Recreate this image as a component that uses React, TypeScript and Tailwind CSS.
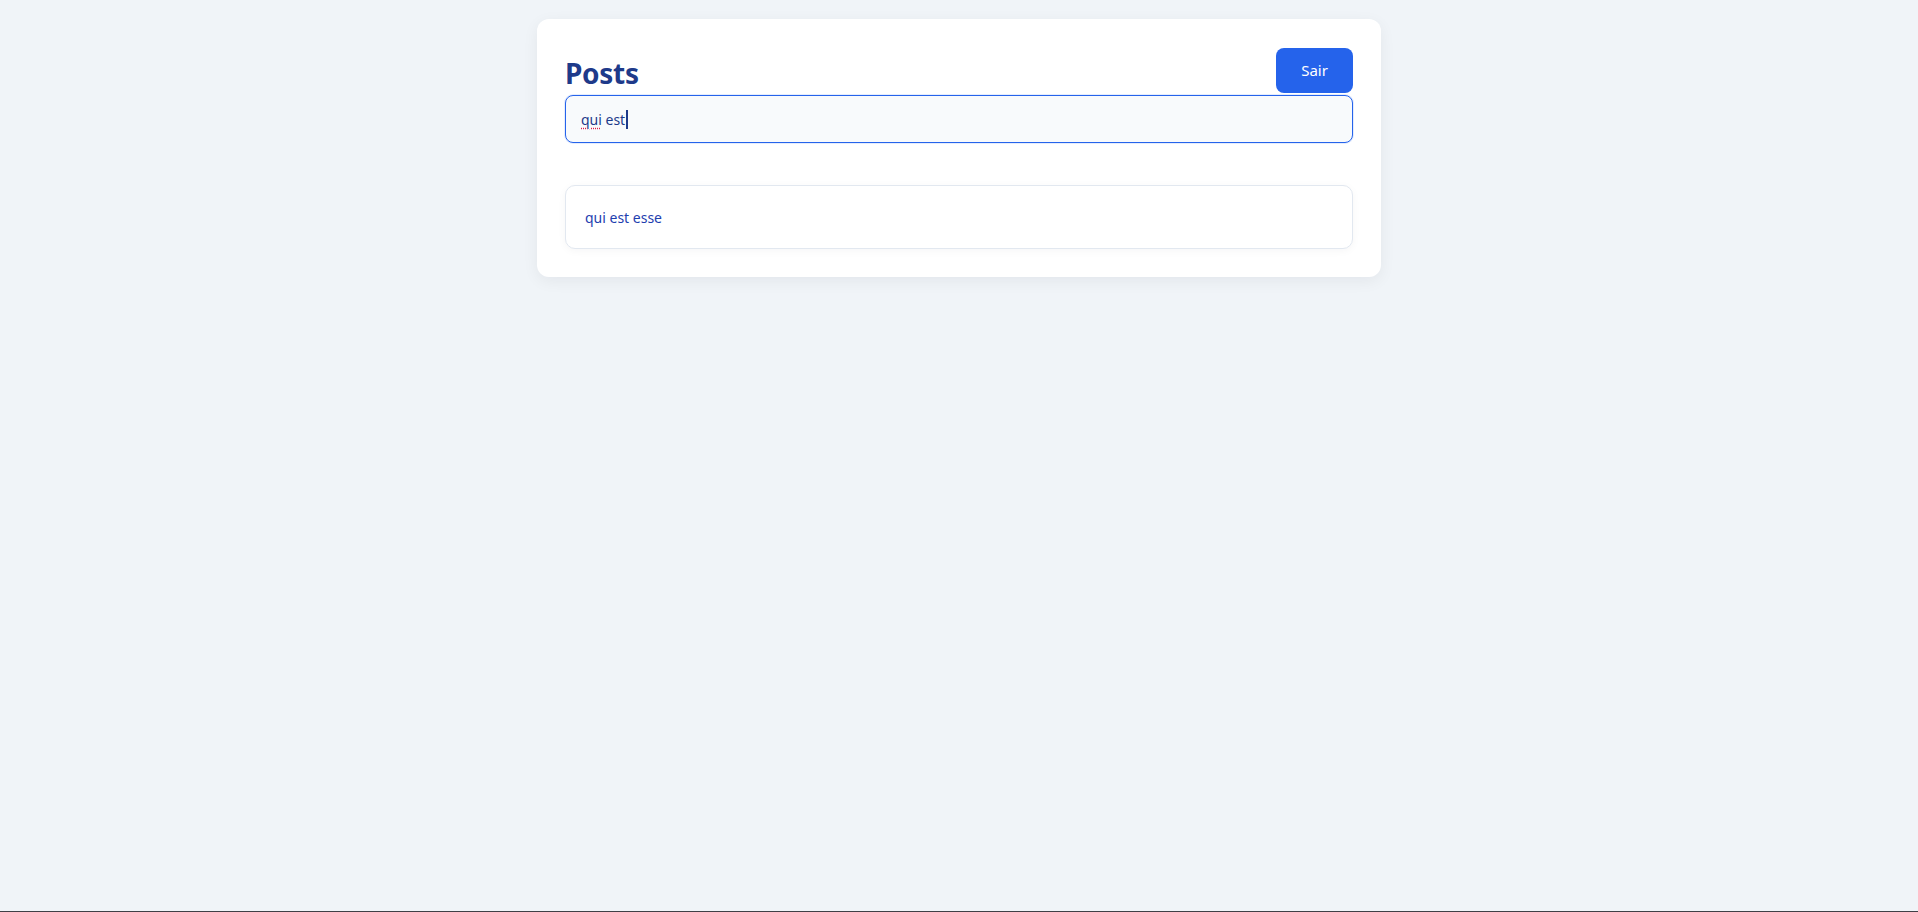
import React from "react";

export default function App() {
  return (
    <div
      className="h-screen w-full flex flex-col bg-[#f0f4f8]"
      style={{ fontFamily: '"Noto Sans", "Open Sans", sans-serif' }}
    >
      <div className="flex-1 flex justify-center pt-[19px]">
        <div className="w-[844px] h-fit bg-white rounded-xl shadow-[0_4px_16px_rgba(15,23,42,0.06)] px-[28px] pt-[29px] pb-[28px]">
          <div className="flex items-center justify-between h-[45px] mb-[2px]">
            <h1 className="text-[28px] leading-none font-bold text-[#1e3a8a] pt-[4px] tracking-[-0.3px]">
              Posts
            </h1>
            <button className="w-[77px] h-[45px] rounded-lg bg-[#2563eb] text-white text-[15px]">
              Sair
            </button>
          </div>
          <div className="h-[48px] rounded-lg border border-[#2563eb] bg-[#f8fafc] shadow-[0_0_0_1px_rgba(37,99,235,0.12)] flex items-center pl-[15px] text-[14px] text-[#1e3a8a]">
            <span className="underline decoration-dotted decoration-[#e11d48] underline-offset-[3px]">
              qui
            </span>
            <span className="whitespace-pre"> est</span>
            <span className="w-[2px] h-[19px] bg-[#1e3a8a] ml-px" />
          </div>
          <div className="mt-[42px] flex flex-col gap-3">
            <div className="h-[64px] rounded-[10px] border border-[#e2e8f0] bg-white shadow-[0_2px_8px_rgba(15,23,42,0.04)] flex items-center px-[19px] text-[14px] text-[#1e40af]">
              qui est esse
            </div>
          </div>
        </div>
      </div>
      <div className="h-px bg-[#3f3f46]" />
    </div>
  );
}
